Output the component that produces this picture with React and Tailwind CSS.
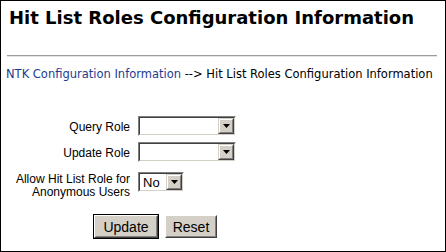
const verdana = { fontFamily: '"DejaVu Sans", Verdana, sans-serif' }
const arial = { fontFamily: '"Liberation Sans", Arial, sans-serif' }

function Select({ width, value }) {
    return (
        <div
            className={`${width} h-[20px] border border-t-[#808080] border-l-[#808080] border-b-white border-r-white`}
        >
            <div className="h-full flex border border-t-[#404040] border-l-[#404040] border-b-[#d4d0c8] border-r-[#d4d0c8] bg-white">
                <div className="flex-1 flex items-center pl-[3px] text-[13px] leading-none text-black" style={arial}>
                    {value}
                </div>
                <div className="w-[16px] h-full border border-t-[#d4d0c8] border-l-[#d4d0c8] border-b-[#404040] border-r-[#404040]">
                    <div className="h-full flex items-center justify-center bg-[#d4d0c8] border border-t-white border-l-white border-b-[#808080] border-r-[#808080]">
                        <svg width="7" height="4" viewBox="0 0 7 4">
                            <path d="M0 0h7L3.5 4z" fill="#000" />
                        </svg>
                    </div>
                </div>
            </div>
        </div>
    )
}

function Button({ label, isDefault, width }) {
    const face = (
        <div className={`${width} h-[23px] border border-t-white border-l-white border-b-[#404040] border-r-[#404040] bg-[#d4d0c8]`}>
            <div className="h-full flex items-center justify-center border border-t-[#d4d0c8] border-l-[#d4d0c8] border-b-[#808080] border-r-[#808080] text-[14px] leading-none text-black" style={arial}>
                {label}
            </div>
        </div>
    )
    if (!isDefault) return face
    return <div className="border border-black">{face}</div>
}

export default function App() {
    return (
        <div className="w-[446px] h-[252px] border border-black bg-white box-border overflow-hidden">
            <h1 className="pt-[6px] pl-[8px] text-[18px] leading-[22px] font-bold text-black" style={verdana}>
                Hit List Roles Configuration Information
            </h1>

            <div className="mt-[26px] ml-[6px] mr-[8px] h-[2px] border-t border-t-[#9c9c9c] border-b border-b-[#e4e4e4]" />

            <div className="mt-[10px] pl-[5px] text-[11.5px] leading-[14px] text-black whitespace-nowrap" style={verdana}>
                <span className="text-[#1c3b90]">NTK Configuration Information</span> --&gt; Hit List Roles Configuration Information
            </div>

            <div className="mt-[35px] ml-[11px] flex flex-col text-[12px] leading-[13px] text-black" style={arial}>
                <div className="flex items-center gap-x-2">
                    <div className="w-[118px] text-right pt-[2px]">Query Role</div>
                    <Select width="w-[98px]" value="" />
                </div>
                <div className="mt-[6px] flex items-center gap-x-2">
                    <div className="w-[118px] text-right pt-[2px]">Update Role</div>
                    <Select width="w-[98px]" value="" />
                </div>
                <div className="mt-[10px] flex items-start gap-x-2">
                    <div className="w-[118px] text-right mt-[1px]">
                        Allow Hit List Role for
                        <br />
                        Anonymous Users
                    </div>
                    <Select width="w-[46px]" value="No" />
                </div>
            </div>

            <div className="mt-[15px] ml-[92px] flex items-center gap-x-[6px]">
                <Button label="Update" isDefault width="w-[64px]" />
                <Button label="Reset" width="w-[52px]" />
            </div>
        </div>
    )
}
